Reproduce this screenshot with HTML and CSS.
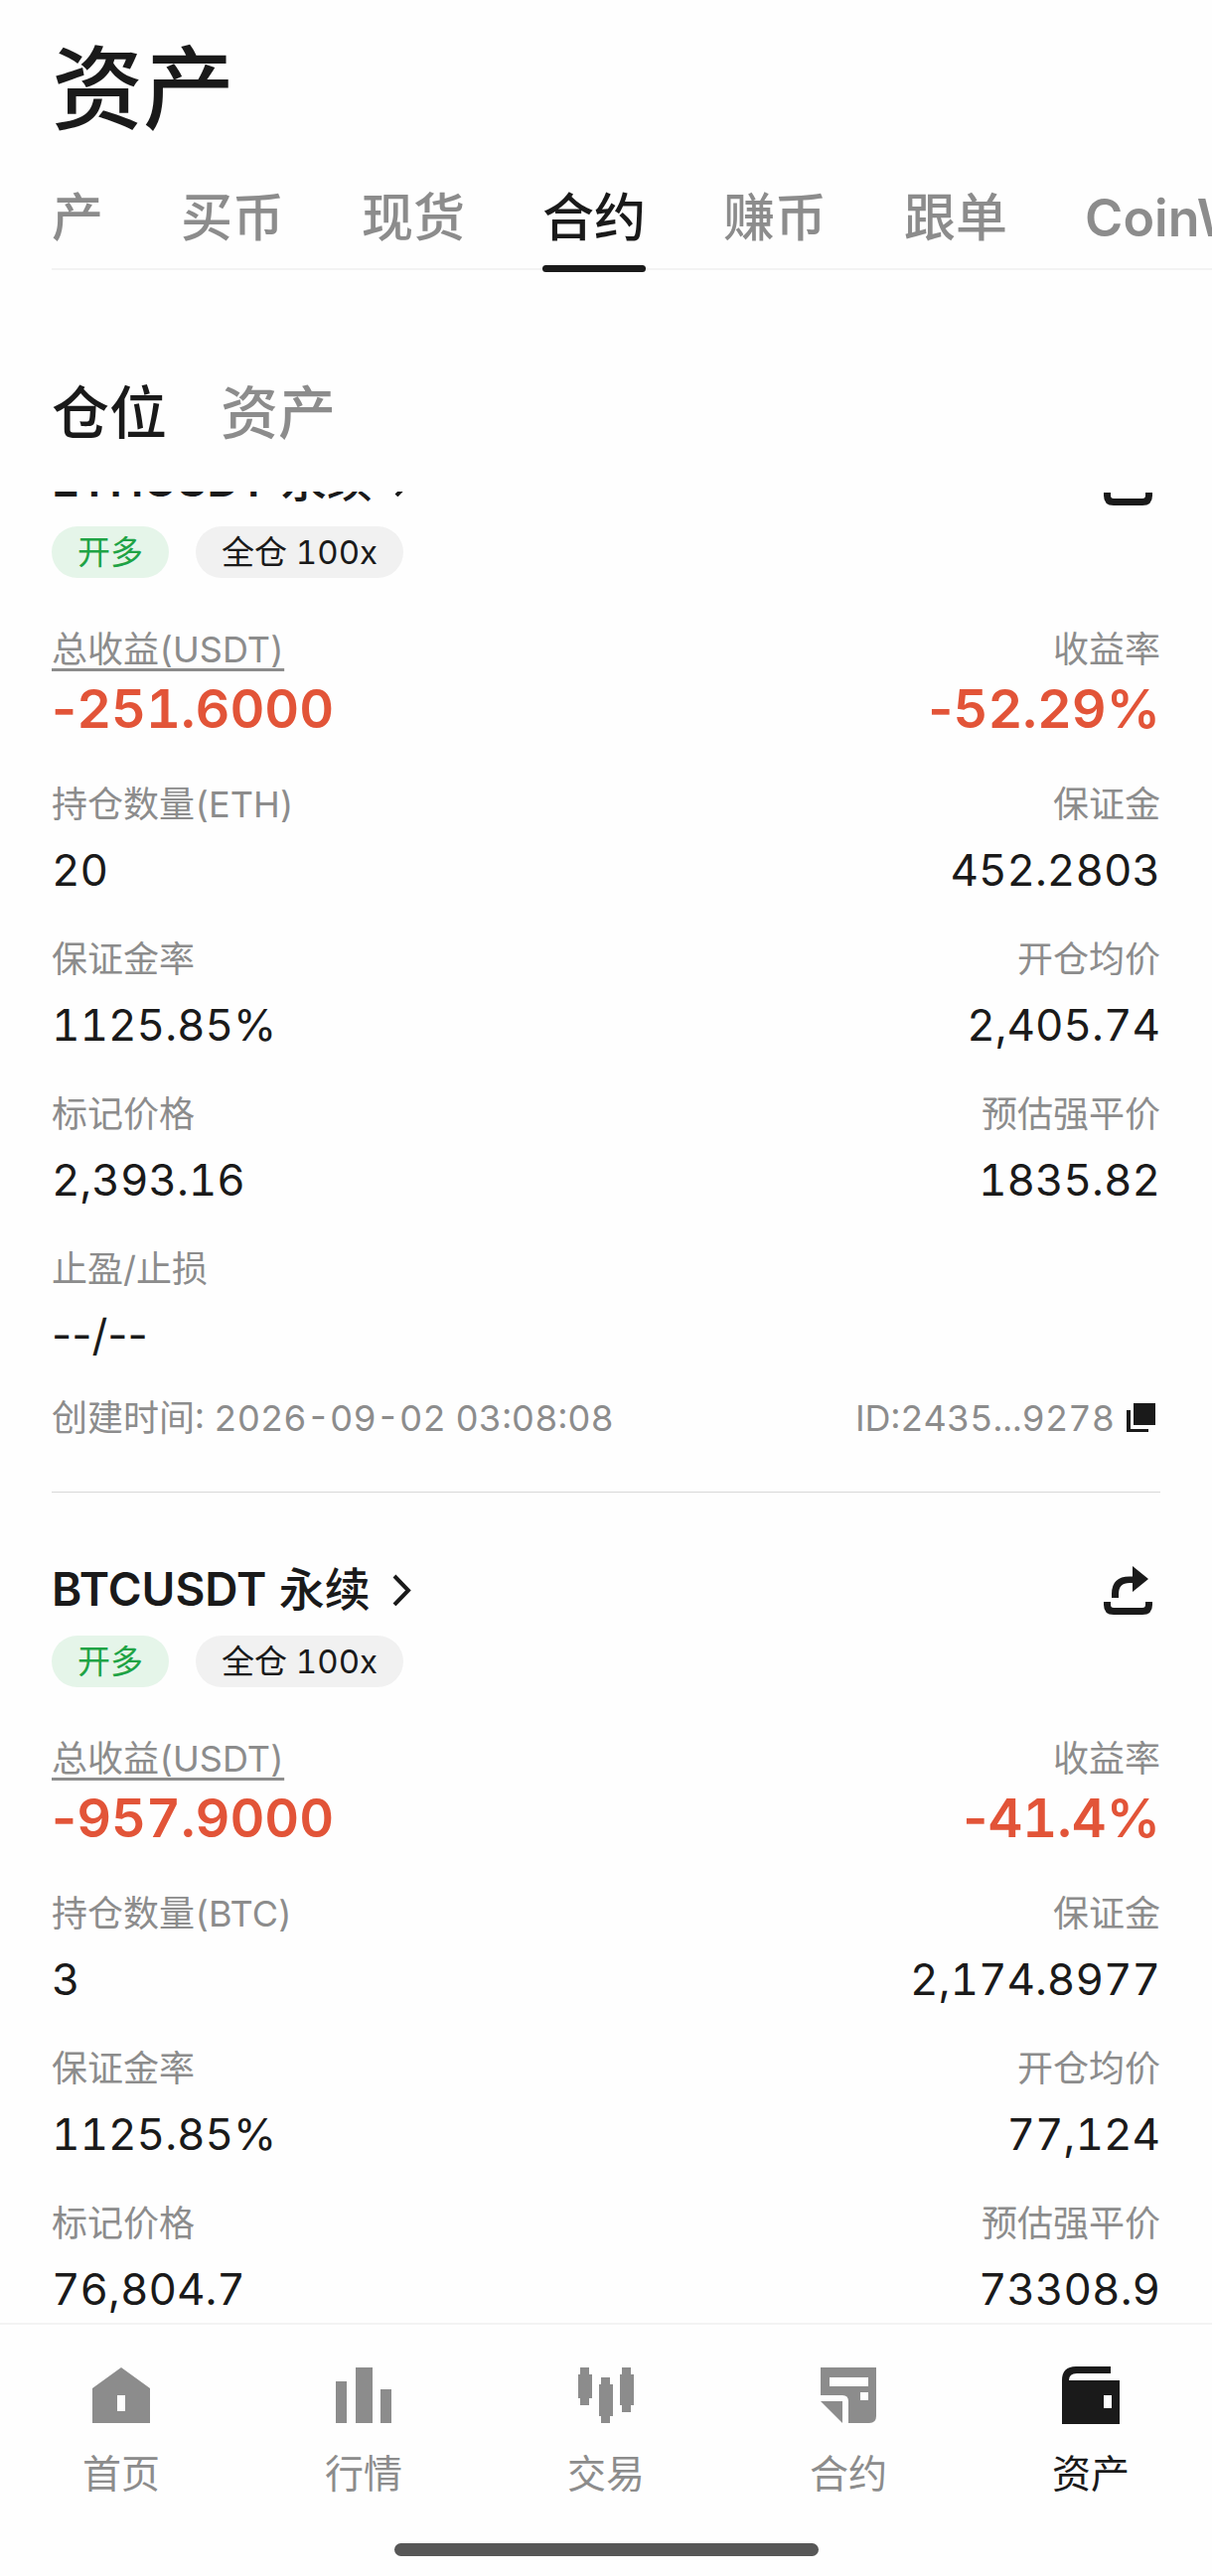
FILE: index.html
```html
<!DOCTYPE html>
<html lang="zh-CN">
<head>
<meta charset="utf-8">
<meta name="viewport" content="width=device-width, initial-scale=1">
<title>资产</title>
<link rel="stylesheet" href="styles.css">
</head>
<body>
<svg class="sprite" aria-hidden="true">
  <symbol id="chevron" viewBox="0 0 20 34"><path d="M2 4 L16 18.500 L2 33" fill="none" stroke="currentColor" stroke-width="4"/></symbol>
  <symbol id="share" viewBox="0 0 50 50"><path d="M29 0 L45 13 L29 26 V17 H26 Q15 17 15 28 V32 H8 V28 Q8 10.500 26 10.500 H29 Z M0 36 H7 V39 Q7 42 10 42 H39 Q42 42 42 39 V36 H49 V39 Q49 49 39 49 H10 Q0 49 0 39 Z" fill="currentColor"/></symbol>
  <symbol id="copy" viewBox="0 0 30 30"><path d="M7 0 H29 V22 H7 Z M0 7 H4 V26 H22 V29 H0 Z" fill="currentColor"/></symbol>
</svg>

<main class="page">
  <h1 class="title">资产</h1>

  <nav class="tabs" aria-label="账户">
    <button class="tab" type="button">产</button>
    <button class="tab" type="button">买币</button>
    <button class="tab" type="button">现货</button>
    <button class="tab tab-active" type="button">合约</button>
    <button class="tab" type="button">赚币</button>
    <button class="tab" type="button">跟单</button>
    <button class="tab tab-latin" type="button">CoinW</button>
  </nav>

  <div class="subtabs">
    <button class="subtab subtab-active" type="button">仓位</button>
    <button class="subtab" type="button">资产</button>
  </div>

  <section class="positions">
    <article class="position position-scrolled">
      <header class="position-head">
        <a class="pair" href="#eth"><span>ETHUSDT <span class="pair-type">永续</span></span><svg class="chevron"><use href="#chevron"/></svg></a>
        <button class="share" type="button" aria-label="分享"><svg class="share-icon"><use href="#share"/></svg></button>
      </header>
      <div class="badges"><span class="badge badge-long">开多</span><span class="badge">全仓 100x</span></div>
      <dl class="profit">
        <div class="cell"><dt><span class="hint">总收益(USDT)</span></dt><dd><span class="sign">-</span>251.6000</dd></div>
        <div class="cell"><dt>收益率</dt><dd><span class="sign">-</span>52.29%</dd></div>
      </dl>
      <dl class="facts">
        <div class="cell"><dt>持仓数量(ETH)</dt><dd>20</dd></div>
        <div class="cell"><dt>保证金</dt><dd>452.2803</dd></div>
        <div class="cell"><dt>保证金率</dt><dd>1125.85%</dd></div>
        <div class="cell"><dt>开仓均价</dt><dd>2,405.74</dd></div>
        <div class="cell"><dt>标记价格</dt><dd>2,393.16</dd></div>
        <div class="cell"><dt>预估强平价</dt><dd>1835.82</dd></div>
        <div class="cell"><dt>止盈/止损</dt><dd class="unset">--/--</dd></div>
      </dl>
      <footer class="meta">
        <span>创建时间: 2026-09-02 03:08:08</span>
        <span class="order-id">ID:2435...9278<button class="copy" type="button" aria-label="复制"><svg class="copy-icon"><use href="#copy"/></svg></button></span>
      </footer>
    </article>

    <article class="position">
      <header class="position-head">
        <a class="pair" href="#btc"><span>BTCUSDT <span class="pair-type">永续</span></span><svg class="chevron"><use href="#chevron"/></svg></a>
        <button class="share" type="button" aria-label="分享"><svg class="share-icon"><use href="#share"/></svg></button>
      </header>
      <div class="badges"><span class="badge badge-long">开多</span><span class="badge">全仓 100x</span></div>
      <dl class="profit">
        <div class="cell"><dt><span class="hint">总收益(USDT)</span></dt><dd><span class="sign">-</span>957.9000</dd></div>
        <div class="cell"><dt>收益率</dt><dd><span class="sign">-</span>41.4%</dd></div>
      </dl>
      <dl class="facts">
        <div class="cell"><dt>持仓数量(BTC)</dt><dd>3</dd></div>
        <div class="cell"><dt>保证金</dt><dd>2,174.8977</dd></div>
        <div class="cell"><dt>保证金率</dt><dd>1125.85%</dd></div>
        <div class="cell"><dt>开仓均价</dt><dd>77,124</dd></div>
        <div class="cell"><dt>标记价格</dt><dd>76,804.7</dd></div>
        <div class="cell"><dt>预估强平价</dt><dd>73308.9</dd></div>
      </dl>
    </article>
  </section>

  <nav class="bottom-nav" aria-label="主导航">
    <a class="nav-item" href="#home">
      <svg class="nav-icon" viewBox="0 0 60 60"><path fill-rule="evenodd" d="M30 2 L59 23 V58 H1 V23 Z M26 30 H34 V46 H26 Z"/></svg>首页</a>
    <a class="nav-item" href="#market">
      <svg class="nav-icon" viewBox="0 0 60 60"><path d="M2 16 H13 V58 H2 Z M22 2 H39 V58 H22 Z M47 24 H58 V58 H47 Z"/></svg>行情</a>
    <a class="nav-item" href="#trade">
      <svg class="nav-icon" viewBox="0 0 60 60"><path d="M4 2 H13 V9 H16 V33 H13 V40 H4 V33 H2 V9 H4 Z M25 12 H34 V19 H37 V51 H34 V58 H25 V51 H23 V19 H25 Z M46 2 H55 V9 H58 V40 H55 V47 H46 V40 H44 V9 H46 Z"/></svg>交易</a>
    <a class="nav-item" href="#futures">
      <svg class="nav-icon" viewBox="0 0 60 60"><path fill-rule="evenodd" d="M2 2 H58 V51 Q58 58 51 58 H30 V36 Q30 30 24 30 H2 Z M11 12 V21 H50 V12 Z M42 27 V35 H50 V27 Z M2 36 H24 V58 Z"/></svg>合约</a>
    <a class="nav-item nav-item-active" href="#assets" aria-current="page">
      <svg class="nav-icon" viewBox="0 0 60 60"><path fill-rule="evenodd" d="M1 59 V15 Q1 1 15 1 H50 V8 H16 Q8 8 8 15 H59 V59 Z M43 30 V43 H51 V30 Z"/></svg>资产</a>
  </nav>
  <div class="home-indicator"></div>
</main>
</body>
</html>
```
FILE: styles.css
```css
:root {
  --ink: #1a1a1a;
  --muted: #8c8c8c;
  --line: #f3f3f3;
  --loss: #e25438;
  --side: 52px;
}

* {
  box-sizing: border-box;
}

body {
  margin: 0;
  background: #fefefe;
  color: var(--ink);
  font-family: Inter, "Noto Sans CJK SC", sans-serif;
  font-variant-numeric: tabular-nums;
}

button {
  padding: 0;
  border: 0;
  background: none;
  color: inherit;
  font: inherit;
  cursor: pointer;
}

a {
  color: inherit;
  text-decoration: none;
}

dl,
dd {
  margin: 0;
}

svg {
  display: block;
}

.sprite {
  display: none;
}

.page {
  display: flex;
  flex-direction: column;
  height: 100vh;
  overflow: hidden;
}

.title {
  margin: 0;
  padding: 40px var(--side) 0;
  font-size: 92px;
  font-weight: 500;
  line-height: 100px;
}

/* Account tabs run past the right edge of the window */
.tabs {
  display: flex;
  flex-shrink: 0;
  gap: 78px;
  margin: 50px 0 0 var(--side);
  border-bottom: 2px solid var(--line);
}

.tab {
  position: relative;
  flex-shrink: 0;
  padding-bottom: 20px;
  color: var(--muted);
  font-size: 52px;
  font-weight: 500;
  line-height: 60px;
}

.tab-latin {
  font-weight: 600;
}

.tab-active {
  color: var(--ink);
}

.tab-active::after {
  content: "";
  position: absolute;
  right: 0;
  bottom: -4px;
  left: 0;
  height: 7px;
  border-radius: 4px;
  background: var(--ink);
}

.subtabs {
  display: flex;
  flex-shrink: 0;
  gap: 54px;
  padding: 109px var(--side) 44px;
}

.subtab {
  color: var(--muted);
  font-size: 58px;
  font-weight: 500;
  line-height: 70px;
}

.subtab-active {
  color: var(--ink);
}

.positions {
  display: flow-root;
  flex: 1;
  min-height: 0;
  overflow: hidden;
  padding: 0 var(--side);
}

.position {
  padding: 67px 0 50px;
  border-bottom: 1px solid #d8d8d8;
}

/* The list is scrolled part of the way into its first card */
.position-scrolled {
  margin-top: -109px;
}

.position-head {
  display: flex;
  align-items: center;
  justify-content: space-between;
}

.pair {
  display: flex;
  align-items: center;
  gap: 22px;
  font-size: 46px;
  font-weight: 600;
  line-height: 60px;
}

.pair-type {
  font-weight: 500;
}

.chevron {
  width: 20px;
  height: 34px;
}

.share {
  padding: 4px 7px 0 0;
}

.share-icon {
  width: 50px;
  height: 50px;
}

.badges {
  display: flex;
  gap: 27px;
  margin-top: 17px;
}

.badge {
  padding: 0 26px;
  border-radius: 26px;
  background: #f1f1f1;
  font-size: 33px;
  line-height: 52px;
}

.badge-long {
  background: #e5f5e9;
  color: #1fa345;
}

.profit,
.facts {
  display: grid;
  grid-template-columns: 1fr 1fr;
}

.profit {
  margin-top: 48px;
}

.facts {
  row-gap: 36px;
  margin-top: 36px;
}

.cell:nth-child(even) {
  text-align: right;
}

dt,
.meta {
  color: var(--muted);
  font-size: 36px;
  line-height: 48px;
}

.hint {
  text-decoration: underline;
  text-decoration-thickness: 3px;
  text-underline-offset: 6px;
  text-decoration-skip-ink: none;
}

.facts dd {
  margin-top: 12px;
  font-size: 44px;
  line-height: 60px;
}

.profit dd {
  color: var(--loss);
  font-size: 54px;
  font-weight: 600;
  line-height: 72px;
}

/* Tabular figures also widen the hyphen */
.sign,
.unset {
  font-variant-numeric: normal;
}

.meta {
  display: flex;
  justify-content: space-between;
  margin-top: 30px;
}

.order-id {
  display: flex;
  align-items: center;
  gap: 12px;
}

.copy {
  padding-right: 4px;
  color: var(--ink);
}

.copy-icon {
  width: 30px;
  height: 30px;
}

.bottom-nav {
  display: grid;
  flex-shrink: 0;
  grid-template-columns: repeat(5, 1fr);
  padding: 41px 0 45px;
  border-top: 2px solid var(--line);
}

.nav-item {
  display: flex;
  flex-direction: column;
  align-items: center;
  gap: 24px;
  color: var(--muted);
  font-size: 39px;
  line-height: 50px;
}

.nav-item-active {
  color: var(--ink);
}

.nav-icon {
  width: 60px;
  height: 60px;
  fill: currentColor;
}

.home-indicator {
  flex-shrink: 0;
  align-self: center;
  width: 35%;
  height: 13px;
  margin-bottom: 20px;
  border-radius: 7px;
  background: #575757;
}
```
